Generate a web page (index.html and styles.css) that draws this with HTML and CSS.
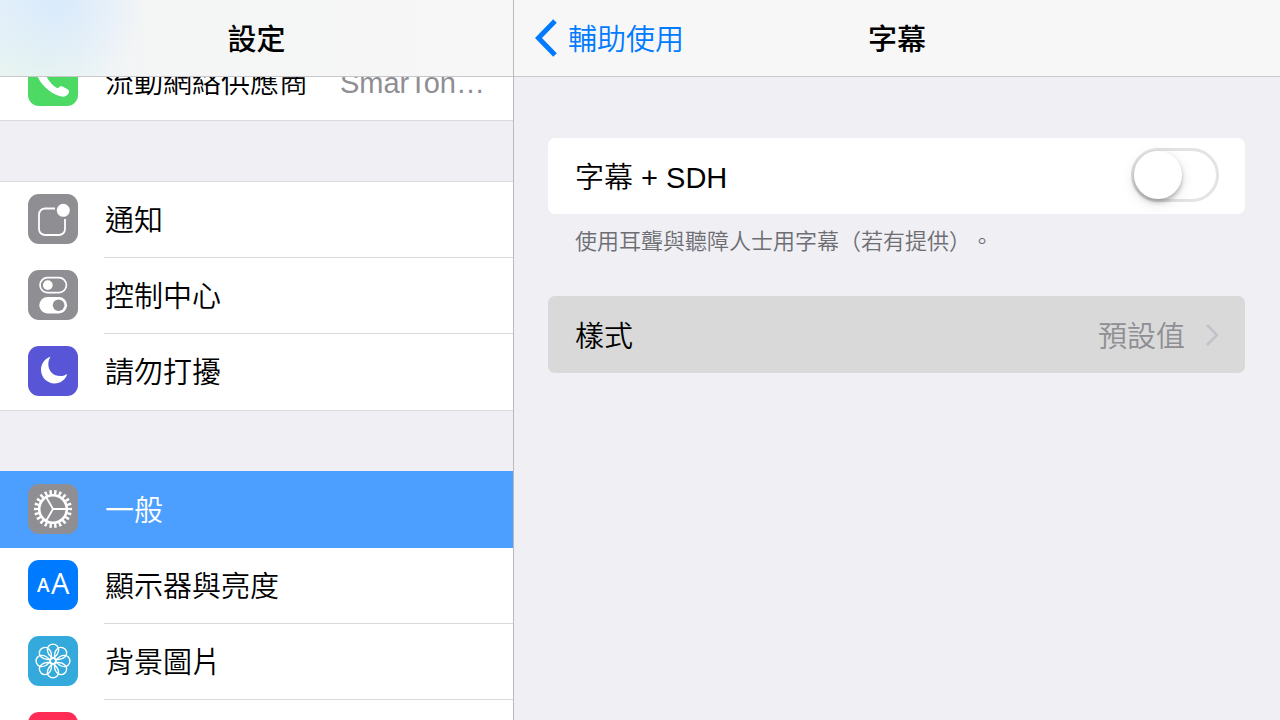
FILE: index.html
```html
<!DOCTYPE html>
<html lang="zh-Hant">
<head>
  <meta charset="UTF-8">
  <meta name="viewport" content="width=device-width, initial-scale=1.0">
  <title>字幕</title>
  <link rel="stylesheet" href="styles.css">
</head>
<body>
  <div class="split">
    <aside class="sidebar">
      <header class="navbar sidebar-bar">
        <h1 class="nav-title">設定</h1>
      </header>

      <nav class="menu">
        <ul class="group">
          <li>
            <a class="row" href="#carrier">
              <svg class="icon green" viewBox="0 0 50 50">
                <path fill="#fff" d="M12.500 9.500c2-1.500 3.500-1 4.500.5l2.500 4.500c1 1.700.5 2.800-.5 3.700-1 .8-.8 1.500-.3 2.500 2 4.500 6 8.800 9.800 11 .9.5 1.500.5 2.200-.3 1-1.200 2.300-1.600 3.800-.8l5 2.700c1.700 1 2 2.400 1 4.200-1.500 2.700-4.500 3.800-8 2.800C22 38 11 27 8.500 17.500c-1-3.500 1-6 4-8z"/>
              </svg>
              <span class="label">流動網絡供應商</span>
              <span class="label value">SmarTon…</span>
            </a>
          </li>
        </ul>

        <ul class="group">
          <li>
            <a class="row" href="#notifications">
              <svg class="icon gray" viewBox="0 0 50 50">
                <path fill="none" stroke="#fff" stroke-width="1.8" d="M27 14.5H17a6 6 0 0 0-6 6V35a6 6 0 0 0 6 6h14a6 6 0 0 0 6-6V25"/>
                <circle cx="35.3" cy="16.3" r="6.5" fill="#fff"/>
              </svg>
              <span class="label">通知</span>
            </a>
          </li>
          <li>
            <a class="row" href="#control-center">
              <svg class="icon gray" viewBox="0 0 50 50">
                <rect x="12" y="7.6" width="26.4" height="15" rx="7.5" fill="none" stroke="#fff" stroke-width="1.7"/>
                <circle cx="19.8" cy="15.1" r="4.9" fill="#fff"/>
                <rect x="11.3" y="27" width="27.8" height="16.4" rx="8.2" fill="#fff"/>
                <circle cx="30.6" cy="35.2" r="5.8" fill="#8e8e93"/>
              </svg>
              <span class="label">控制中心</span>
            </a>
          </li>
          <li>
            <a class="row" href="#do-not-disturb">
              <svg class="icon purple" viewBox="0 0 50 50">
                <path fill="#fff" d="M22.500 10.800C16.800 12.500 13 17.800 13 23.800C13 31.300 19 37.500 26.500 37.500C32.500 37.500 37.700 33.500 39.300 28C37.500 29.300 35 30.100 32.300 30.100C25.500 30.100 20.300 25 20.300 18.500C20.300 15.500 21 13 22.500 10.800z"/>
              </svg>
              <span class="label">請勿打擾</span>
            </a>
          </li>
        </ul>

        <ul class="group">
          <li>
            <a class="row selected" href="#general" aria-current="page">
              <svg class="icon gray" viewBox="0 0 50 50">
                <g fill="none" stroke="#fff">
                  <circle cx="25" cy="25" r="13.8" stroke-width="2.6"/>
                  <circle cx="25" cy="25" r="16.8" stroke-width="4.4" pathLength="44" stroke-dasharray="1 1" stroke-dashoffset=".5"/>
                  <path stroke-width="1.8" d="M25 25h13M25 25l-6.5-11.3M25 25l-6.5 11.3"/>
                </g>
              </svg>
              <span class="label">一般</span>
            </a>
          </li>
          <li>
            <a class="row" href="#display">
              <svg class="icon blue" viewBox="0 0 50 50">
                <text class="small-a" x="9" y="32">A</text>
                <text class="large-a" x="23" y="34">A</text>
              </svg>
              <span class="label">顯示器與亮度</span>
            </a>
          </li>
          <li>
            <a class="row" href="#wallpaper">
              <svg class="icon cyan" viewBox="0 0 50 50">
                <g fill="none" stroke="#fff" stroke-width="1.4" transform="translate(25 25)">
                  <circle r="2.8"/>
                  <g id="petals">
                    <path id="petal" d="M0-2.8C-3.5-5-5.6-8.500-5.6-11.500a5.600 5.400 0 0 1 11.200 0C5.600-8.500 3.500-5 0-2.8z"/>
                    <use href="#petal" transform="rotate(45)"/>
                    <use href="#petal" transform="rotate(90)"/>
                    <use href="#petal" transform="rotate(135)"/>
                  </g>
                  <use href="#petals" transform="rotate(180)"/>
                </g>
              </svg>
              <span class="label">背景圖片</span>
            </a>
          </li>
          <li>
            <a class="row" href="#sounds">
              <svg class="icon red" viewBox="0 0 50 50"></svg>
            </a>
          </li>
        </ul>
      </nav>
    </aside>

    <main class="detail">
      <header class="navbar detail-bar">
        <a class="back" href="#accessibility">
          <svg class="back-arrow" viewBox="0 0 22 38">
            <path fill="none" stroke="#007aff" stroke-width="5" d="M20 2L3.500 19L20 36"/>
          </svg>
          <span class="label">輔助使用</span>
        </a>
        <h2 class="nav-title">字幕</h2>
      </header>

      <div class="content">
        <div class="card">
          <label class="label" for="sdh">字幕 + SDH</label>
          <input class="switch" type="checkbox" id="sdh" role="switch">
        </div>
        <p class="note">使用耳聾與聽障人士用字幕（若有提供）。</p>

        <a class="card pressed" href="#style">
          <span class="label">樣式</span>
          <span class="label card-value">預設值</span>
          <svg class="chevron" viewBox="0 0 14 24">
            <path fill="none" stroke="#c2c2c8" stroke-width="2.6" d="M2 2l10 10L2 22"/>
          </svg>
        </a>
      </div>
    </main>
  </div>
</body>
</html>
```
FILE: styles.css
```css
* {
  box-sizing: border-box;
}

body {
  margin: 0;
  font-family: "Liberation Sans", "Noto Sans CJK TC", sans-serif;
  font-size: 29px;
  font-weight: 350;
  line-height: 40px;
  color: #000;
  background-color: #efeff4;
}

a {
  color: inherit;
  text-decoration: none;
}

.split {
  display: grid;
  grid-template-columns: calc(40% + 2px) 1fr;
  height: 100vh;
  overflow: hidden;
}

.sidebar {
  border-right: 1px solid #b9b9be;
  overflow: hidden;
}

.navbar {
  height: 77px;
  display: grid;
  align-items: center;
  background-color: #f7f7f8;
  border-bottom: 1px solid #c8c8cc;
}

.sidebar-bar {
  position: relative;
  z-index: 1;
  justify-content: center;
  background-image:
    radial-gradient(circle at 55px 0, #d8eafc, rgba(216, 234, 252, 0) 90px),
    radial-gradient(circle at 30px 77px, #e8f5ee, rgba(232, 245, 238, 0) 90px),
    linear-gradient(to right, #e9f2fa, #f4f5f5 150px, #f7f7f8);
}

.detail-bar {
  grid-template-columns: 1fr auto 1fr;
}

.nav-title {
  margin: 0;
  padding-top: 3px;
  font-size: 29px;
  font-weight: 500;
}

.back {
  display: flex;
  align-items: center;
  gap: 11px;
  padding-left: 21px;
  color: #007aff;
}

.back-arrow {
  width: 22px;
  height: 38px;
}

/* the list is scrolled a little way under the bar */
.menu {
  margin-top: -34px;
}

.group {
  list-style: none;
  margin: 0 0 60px;
  padding: 0;
  background-color: #fff;
  border-top: 1px solid #dadade;
  border-bottom: 1px solid #dadade;
}

.row {
  position: relative;
  display: flex;
  align-items: center;
  height: 76px;
  padding: 0 28px 2px;
  gap: 27px;
}

.group li:not(:last-child) .row:not(.selected)::after {
  content: "";
  position: absolute;
  left: 104px;
  right: 0;
  bottom: 0;
  height: 1px;
  background-color: #dadade;
}

.label {
  padding-top: 4px;
  white-space: nowrap;
}

.value {
  margin-left: auto;
  color: #8e8e93;
}

.row.selected {
  color: #fff;
  background-color: #4c9eff;
}

.group:has(.selected) {
  border-top-color: #4c9eff;
}

.icon {
  flex: none;
  width: 50px;
  height: 50px;
  border-radius: 11px;
}

.green { background-color: #4cd964; }
.gray { background-color: #8e8e93; }
.purple { background-color: #5856d6; }
.blue { background-color: #007aff; }
.cyan { background-color: #34aadc; }
.red { background-color: #ff2d55; }

.small-a,
.large-a {
  font-family: "Open Sans", sans-serif;
  fill: #fff;
}

.small-a {
  font-size: 19px;
  font-weight: 600;
}

.large-a {
  font-size: 29px;
  font-weight: 400;
}

.content {
  padding: 61px 35px 0 34px;
}

.card {
  display: flex;
  align-items: center;
  height: 76px;
  padding: 0 26px 0 27px;
  border-radius: 7px;
  background-color: #fff;
}

.card.pressed {
  height: 77px;
  background-color: #d9d9d9;
}

.card-value {
  margin-left: auto;
  color: #8e8e93;
}

.chevron {
  width: 14px;
  height: 24px;
  margin-left: 20px;
}

.note {
  margin: 13px 27px 39px;
  font-size: 22px;
  line-height: 30px;
  text-spacing-trim: space-all;
  color: #6d6d72;
}

.switch {
  appearance: none;
  display: flex;
  width: 88px;
  height: 54px;
  margin: 0 0 2px auto;
  padding: 0;
  border: 3px solid #e3e3e3;
  border-radius: 27px;
  background-color: #fff;
}

.switch::before {
  content: "";
  width: 48px;
  height: 48px;
  border-radius: 50%;
  background-color: #fff;
  box-shadow: 0 3px 4px rgba(0, 0, 0, 0.25), 0 4px 14px rgba(0, 0, 0, 0.12);
}

.switch:checked {
  justify-content: flex-end;
  border-color: #4cd964;
  background-color: #4cd964;
}
```
